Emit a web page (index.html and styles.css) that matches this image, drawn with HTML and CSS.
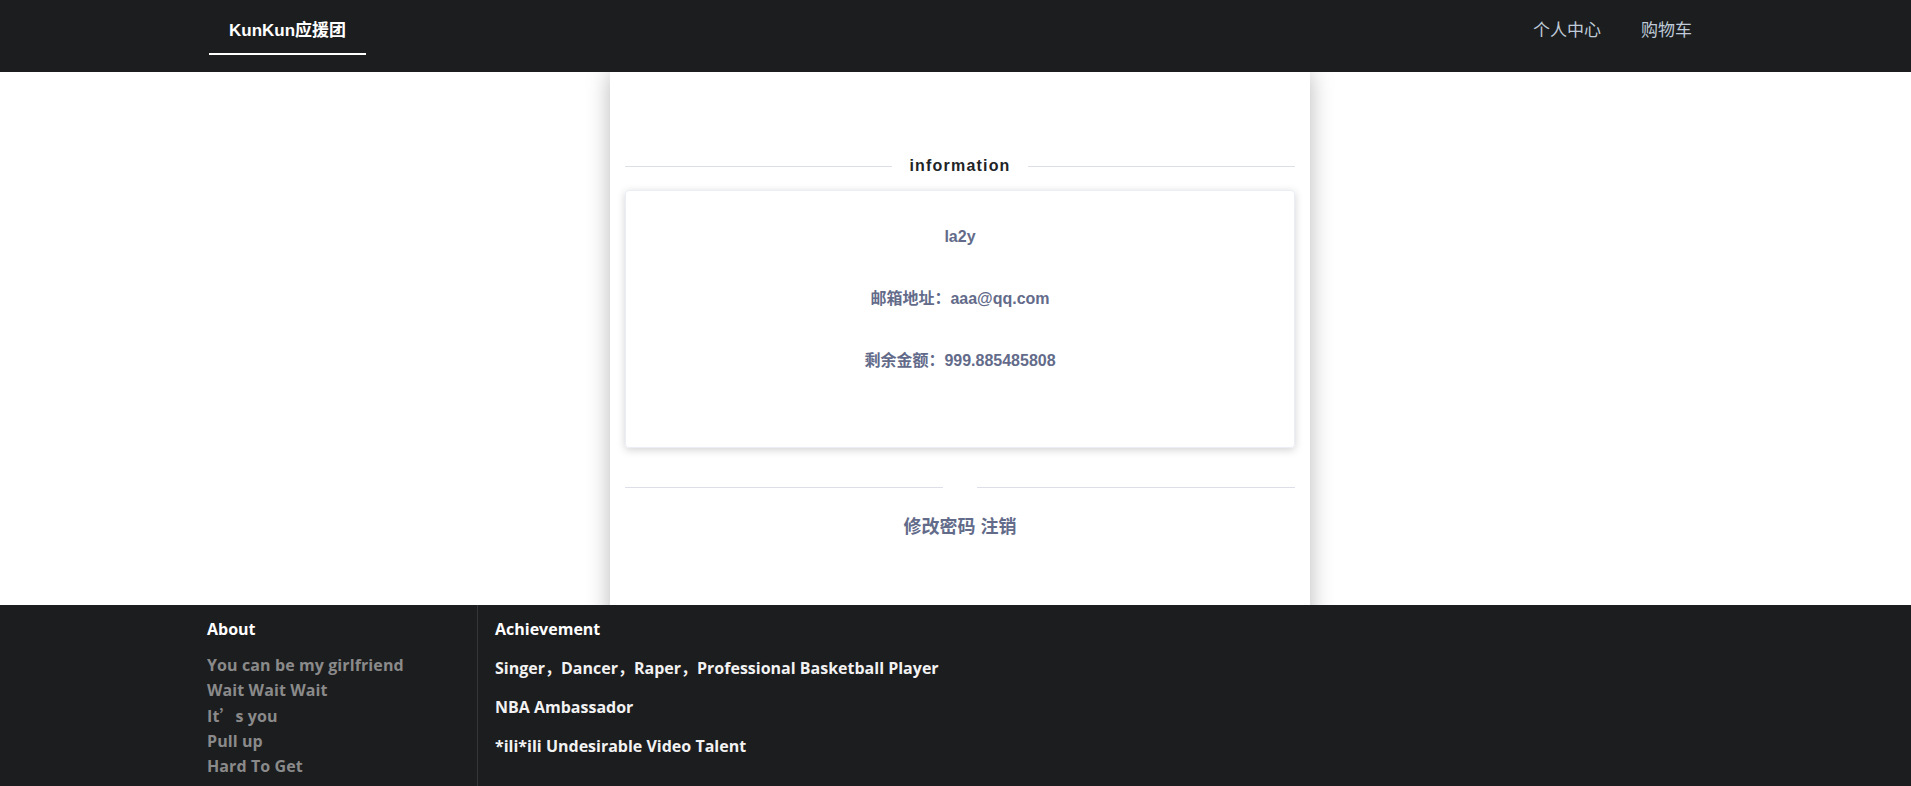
FILE: index.html
```html
<!DOCTYPE html>
<html lang="zh">
<head>
<meta charset="utf-8">
<title>KunKun应援团</title>
<link rel="stylesheet" href="styles.css">
</head>
<body>
<div class="page">
  <header class="topbar">
    <div class="topbar-inner">
      <nav class="menu">
        <a class="menu-item brand is-active">KunKun应援团</a>
      </nav>
      <nav class="menu">
        <a class="menu-item">个人中心</a>
        <a class="menu-item">购物车</a>
      </nav>
    </div>
  </header>

  <main class="main">
    <section class="profile">
      <div class="divider"><span class="divider-text">information</span></div>
      <div class="info-card">
        <div class="info-line">la2y</div>
        <div class="info-line">邮箱地址：aaa@qq.com</div>
        <div class="info-line">剩余金额：999.885485808</div>
      </div>
      <div class="divider divider-second"><span class="divider-text"></span></div>
      <div class="actions"><a class="action">修改密码</a> <a class="action">注销</a></div>
    </section>
  </main>

  <footer class="footer">
    <div class="footer-inner">
      <div class="footer-col about">
        <div class="footer-title">About</div>
        <ul class="about-list">
          <li>You can be my girlfriend</li>
          <li>Wait Wait Wait</li>
          <li>It<span class="fw">’</span>s you</li>
          <li>Pull up</li>
          <li>Hard To Get</li>
        </ul>
      </div>
      <div class="footer-col achievement">
        <div class="footer-title">Achievement</div>
        <p class="ach-item">Singer，Dancer，Raper，Professional Basketball Player</p>
        <p class="ach-item">NBA Ambassador</p>
        <p class="ach-item">*ili*ili Undesirable Video Talent</p>
      </div>
    </div>
  </footer>
</div>
</body>
</html>
```

FILE: styles.css
```css
html {
  overflow: hidden;
}
body {
  margin: 0;
  background: #fff;
  font-family: "Liberation Sans", Arial, "Noto Sans CJK SC", sans-serif;
}
.page {
  width: 1920px;
}

/* header */
.topbar {
  height: 72px;
  background: #1c1d1f;
}
.topbar-inner {
  display: flex;
  justify-content: space-between;
  padding: 0 208px 0 209px;
}
.menu {
  display: flex;
}
.menu-item {
  display: flex;
  align-items: center;
  box-sizing: border-box;
  height: 55px;
  padding: 7px 20px 3px;
  font-size: 17px;
  color: #bfcbd9;
  border-bottom: 2px solid transparent;
  cursor: pointer;
}
.menu-item.brand {
  font-weight: bold;
  color: #fff;
}
.menu-item.is-active {
  border-bottom-color: #fff;
}

/* main */
.main {
  display: flex;
  justify-content: center;
  height: 533px;
  overflow: hidden;
}
.profile {
  width: 700px;
  box-sizing: border-box;
  padding: 84px 15px 0;
  background: #fff;
  box-shadow: 0 0 22px rgba(0, 0, 0, 0.28);
  margin-bottom: -40px;
}
.divider {
  display: flex;
  align-items: center;
  height: 20px;
}
.divider::before,
.divider::after {
  content: "";
  flex: 1;
  height: 1px;
  background: #dcdfe6;
}
.divider-text {
  padding: 0 17px;
  font-size: 16px;
  font-weight: bold;
  letter-spacing: 1.2px;
  color: #222326;
  line-height: 20px;
}
.info-card {
  margin-top: 14px;
  box-sizing: border-box;
  height: 258px;
  padding-top: 35px;
  border: 1px solid #ebeef5;
  border-radius: 4px;
  box-shadow: 0 2px 8px rgba(0, 0, 0, 0.18);
  display: flex;
  flex-direction: column;
  align-items: center;
  gap: 40px;
}
.info-line {
  font-size: 16px;
  font-weight: bold;
  line-height: 22px;
  color: #636b8a;
}
.divider-second {
  margin-top: 29px;
}
.actions {
  margin-top: 18px;
  text-align: center;
  font-size: 18px;
  font-weight: bold;
  line-height: 24px;
  color: #636b8a;
}
.action {
  cursor: pointer;
}

/* footer */
.footer {
  height: 200px;
  background: #1c1d1f;
  font-family: "Open Sans", "Noto Sans CJK SC", sans-serif;
  font-weight: bold;
  font-size: 16px;
}
.footer-inner {
  display: flex;
  height: 100%;
  padding-left: 207px;
}
.footer-col {
  padding-top: 13px;
}
.footer-col.about {
  width: 270px;
  border-right: 1px solid #35363a;
}
.footer-col.achievement {
  padding-left: 17px;
}
.footer-title {
  color: #fff;
  line-height: 23px;
}
.about-list {
  list-style: none;
  margin: 12px 0 0;
  padding: 0;
}
.about-list li {
  line-height: 25px;
  color: #8a8a8a;
  letter-spacing: 0.1px;
}
.fw {
  font-family: "Noto Sans CJK SC", sans-serif;
  display: inline-block;
  width: 1em;
}
.ach-item {
  margin: 16px 0 0;
  line-height: 23px;
  color: #f2f2f2;
}
```
